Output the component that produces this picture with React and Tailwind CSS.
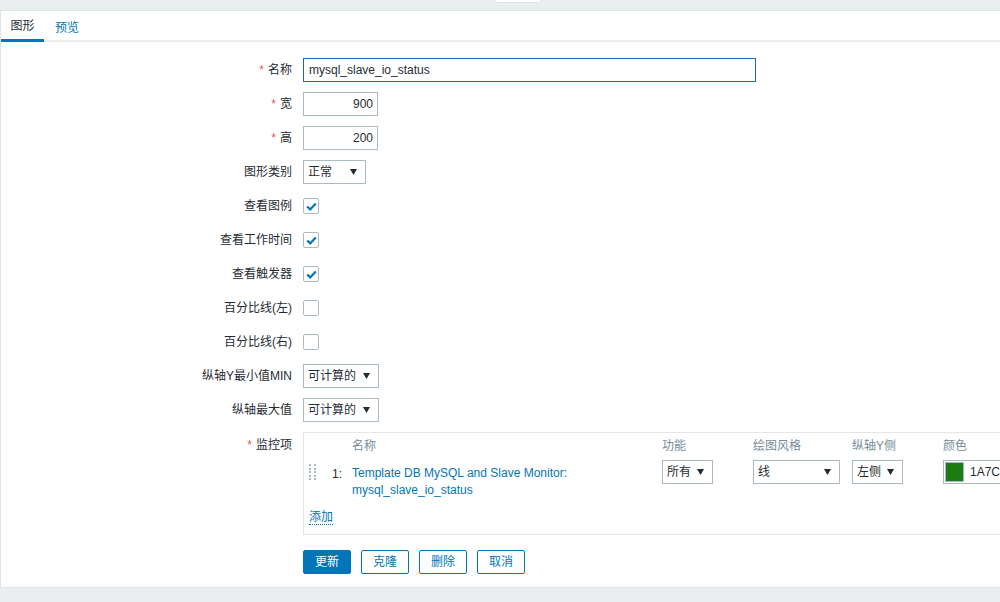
import React from 'react';

const font = { fontFamily: '"Liberation Sans", "Noto Sans CJK SC", Arial, sans-serif' };

const Arrow = () => (
  <svg width="7" height="6" viewBox="0 0 7 6" className="shrink-0">
    <path d="M0 0 H7 L3.5 6 Z" fill="#1f2c33" />
  </svg>
);

const Select = ({ value, width }) => (
  <div className={`flex h-[24px] items-center justify-between border border-[#acbbc2] bg-white pl-[4px] pr-[8px] text-[#1f2c33] ${width}`}>
    <span>{value}</span>
    <Arrow />
  </div>
);

const Check = ({ checked }) => (
  <div className="flex h-[16px] w-[16px] items-center justify-center rounded-[2px] border border-[#acbbc2] bg-white">
    {checked && (
      <svg width="11" height="9" viewBox="0 0 11 9">
        <path d="M1.2 4.5 L4.2 7.4 L9.8 1.4" fill="none" stroke="#0275b8" strokeWidth="2.2" />
      </svg>
    )}
  </div>
);

const Row = ({ label, required, children }) => (
  <div className="flex h-[24px] items-center">
    <div className="w-[292px] shrink-0 pr-[1px] text-right text-[#1f2c33]">
      {required && <span className="mr-[4px] text-[#e45959]">*</span>}
      {label}
    </div>
    <div className="ml-[10px] flex items-center">{children}</div>
  </div>
);

const Button = ({ children, primary }) => (
  <button
    className={`h-[24px] w-[48px] rounded-[2px] border border-[#0275b8] text-[12px] ${
      primary ? 'bg-[#0275b8] text-white' : 'bg-white text-[#0275b8]'
    }`}
  >
    {children}
  </button>
);

export default function App() {
  return (
    <div className="h-[602px] w-[1000px] overflow-hidden bg-[#ebeef0] text-[12px]" style={font}>
      {/* top strip */}
      <div className="relative h-[11px] border-b border-[#dfe4e7]">
        <div className="absolute left-[495px] top-0 h-[3px] w-[46px] rounded-b-[2px] border border-t-0 border-[#dfe4e7] bg-white" />
      </div>

      <div className="h-[577px] border-b border-l border-[#dfe4e7] bg-white">
        {/* tabs */}
        <div className="flex h-[31px] border-b-2 border-[#ebeef0]">
          <div className="flex h-[31px] w-[43px] items-center justify-center border-b-[3px] border-[#0275b8] pt-[2px] text-[#1f2c33]">图形</div>
          <div className="flex h-[31px] w-[46px] items-center justify-center pt-[2px] text-[#0275b8]">预览</div>
        </div>

        {/* form */}
        <div className="mt-[16px] flex flex-col gap-[10px]">
          <Row label="名称" required>
            <div className="flex h-[24px] w-[453px] items-center border border-[#1f65a6] px-[5px] text-[#1f2c33]">
              mysql_slave_io_status
            </div>
          </Row>
          <Row label="宽" required>
            <div className="flex h-[24px] w-[75px] items-center justify-end border border-[#acbbc2] px-[4px] text-[#1f2c33]">900</div>
          </Row>
          <Row label="高" required>
            <div className="flex h-[24px] w-[75px] items-center justify-end border border-[#acbbc2] px-[4px] text-[#1f2c33]">200</div>
          </Row>
          <Row label="图形类别">
            <Select value="正常" width="w-[63px]" />
          </Row>
          <Row label="查看图例"><Check checked /></Row>
          <Row label="查看工作时间"><Check checked /></Row>
          <Row label="查看触发器"><Check checked /></Row>
          <Row label="百分比线(左)"><Check /></Row>
          <Row label="百分比线(右)"><Check /></Row>
          <Row label="纵轴Y最小值MIN">
            <Select value="可计算的" width="w-[76px]" />
          </Row>
          <Row label="纵轴最大值">
            <Select value="可计算的" width="w-[76px]" />
          </Row>

          {/* items */}
          <div className="flex items-start">
            <div className="w-[292px] shrink-0 pr-[1px] pt-[4px] text-right text-[#1f2c33]">
              <span className="mr-[4px] text-[#e45959]">*</span>监控项
            </div>
            <div className="ml-[10px] h-[103px] w-[760px] shrink-0 border border-[#e3e7e9] px-[5px] pt-[5px]">
              <div className="flex h-[16px] items-center text-[#768d99]">
                <div className="w-[43px]" />
                <div className="w-[310px]">名称</div>
                <div className="w-[91px]">功能</div>
                <div className="w-[99px]">绘图风格</div>
                <div className="w-[91px]">纵轴Y侧</div>
                <div>颜色</div>
              </div>
              <div className="mt-[6px] flex items-start">
                <div className="mt-[4px] grid w-[7px] grid-cols-2 gap-x-[2px] gap-y-[1.5px]">
                  {Array.from({ length: 10 }).map((_, i) => (
                    <div key={i} className="h-[2px] w-[2px] bg-[#acbbc2]" />
                  ))}
                </div>
                <div className="ml-[16px] w-[20px] pt-[5px] text-[#1f2c33]">1:</div>
                <div className="w-[310px] pt-[5px] leading-[17px] text-[#0275b8]">
                  Template DB MySQL and Slave Monitor:<br />mysql_slave_io_status
                </div>
                <div className="w-[91px]"><Select value="所有" width="w-[51px]" /></div>
                <div className="w-[99px]"><Select value="线" width="w-[87px]" /></div>
                <div className="w-[91px]"><Select value="左侧" width="w-[51px]" /></div>
                <div className="flex h-[24px] w-[80px] items-center border border-[#acbbc2] pl-[1px]">
                  <div className="h-[20px] w-[19px] border border-[#acbbc2] bg-[#1a7c11]" />
                  <span className="ml-[6px] text-[#1f2c33]">1A7C11</span>
                </div>
              </div>
              <div className="mt-[9px]">
                <span className="border-b border-dotted border-[#0275b8] text-[#0275b8]">添加</span>
              </div>
            </div>
          </div>

          {/* buttons */}
          <div className="ml-[302px] mt-[5px] flex gap-[10px]">
            <Button primary>更新</Button>
            <Button>克隆</Button>
            <Button>删除</Button>
            <Button>取消</Button>
          </div>
        </div>
      </div>
    </div>
  );
}
